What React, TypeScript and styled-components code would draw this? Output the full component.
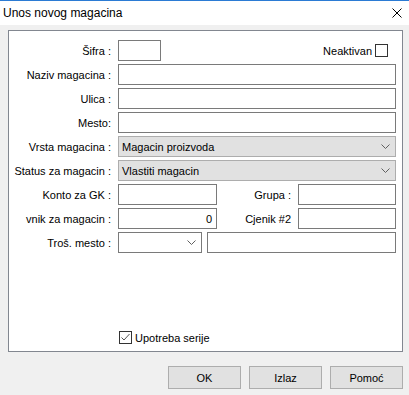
import React from 'react';
import styled, { createGlobalStyle } from 'styled-components';

const GlobalStyle = createGlobalStyle`
  html, body {
    margin: 0;
    padding: 0;
    background: #f0f0f0;
  }
  body {
    font-family: "Liberation Sans", Arial, sans-serif;
    font-size: 11px;
    color: #000;
  }
  * {
    box-sizing: border-box;
  }
`;

const Window = styled.div`
  width: 409px;
  height: 395px;
  display: flex;
  flex-direction: column;
  background: #f0f0f0;
`;

const TitleBar = styled.div`
  height: 25px;
  border-top: 1px solid #2b7bd4;
  background: #fff;
  display: flex;
  align-items: center;
  justify-content: space-between;
  padding: 0 7px 0 3px;
  font-size: 12px;
`;

const Content = styled.div`
  padding: 5px 6px 0 8px;
`;

const Panel = styled.div`
  height: 322px;
  border: 1px solid #828790;
  background: #fff;
  display: flex;
  flex-direction: column;
  padding: 9px 6px 7px 0;
`;

const Form = styled.div`
  display: grid;
  grid-template-columns: 102px 1fr;
  grid-auto-rows: 21px;
  column-gap: 7px;
  row-gap: 3px;
`;

const Label = styled.div`
  display: flex;
  align-items: center;
  justify-content: flex-end;
  white-space: nowrap;
`;

const Input = styled.div<{ $w?: number; $right?: boolean }>`
  height: 21px;
  width: ${p => (p.$w ? `${p.$w}px` : 'auto')};
  flex: ${p => (p.$w ? 'none' : '1')};
  border: 1px solid #7a7a7a;
  background: #fff;
  display: flex;
  align-items: center;
  justify-content: ${p => (p.$right ? 'flex-end' : 'flex-start')};
  padding: 0 4px 0 3px;
`;

const Select = styled.div<{ $w?: number; $flat?: boolean }>`
  height: 21px;
  width: ${p => (p.$w ? `${p.$w}px` : 'auto')};
  flex: ${p => (p.$w ? 'none' : '1')};
  border: 1px solid ${p => (p.$flat ? '#7a7a7a' : '#adadad')};
  background: ${p => (p.$flat ? '#fff' : '#e1e1e1')};
  display: flex;
  align-items: center;
  justify-content: space-between;
  padding: 0 5px 0 3px;
`;

const FieldRow = styled.div`
  display: flex;
  align-items: center;
  gap: 5px;
`;

const SplitRow = styled.div`
  display: grid;
  grid-template-columns: 99px 1fr 98px;
  column-gap: 7px;
`;

const CheckLabel = styled.label<{ $boxRight?: boolean }>`
  display: flex;
  align-items: center;
  gap: 3px;
  white-space: nowrap;
`;

const NeaktivanWrap = styled.div`
  margin-left: auto;
  margin-right: 8px;
`;

const Bottom = styled.div`
  margin-top: auto;
  padding-left: 110px;
`;

const Footer = styled.div`
  display: flex;
  justify-content: flex-end;
  gap: 8px;
  padding: 14px 6px 0 0;
`;

const Button = styled.button`
  width: 73px;
  height: 23px;
  border: 1px solid #adadad;
  background: #e1e1e1;
  font-family: "Liberation Sans", Arial, sans-serif;
  font-size: 11px;
  color: #000;
  padding: 0;
`;

const Chevron = () => (
  <svg width="9" height="5" viewBox="0 0 9 5">
    <polyline points="0.5,0.5 4.5,4.5 8.5,0.5" fill="none" stroke="#606060" strokeWidth="1" />
  </svg>
);

const Box = ({ checked }: { checked?: boolean }) => (
  <svg width="13" height="13" viewBox="0 0 13 13">
    <rect x="0.5" y="0.5" width="12" height="12" fill="#fff" stroke="#333" />
    {checked && <polyline points="2.5,6.5 5,9 10.5,3" fill="none" stroke="#555" strokeWidth="1" />}
  </svg>
);

const CloseIcon = () => (
  <svg width="10" height="10" viewBox="0 0 10 10">
    <line x1="0.5" y1="0.5" x2="9.5" y2="9.5" stroke="#000" strokeWidth="1" />
    <line x1="9.5" y1="0.5" x2="0.5" y2="9.5" stroke="#000" strokeWidth="1" />
  </svg>
);

export default function App() {
  return (
    <>
      <GlobalStyle />
      <Window>
        <TitleBar>
          <span>Unos novog magacina</span>
          <CloseIcon />
        </TitleBar>
        <Content>
          <Panel>
            <Form>
              <Label>Šifra :</Label>
              <FieldRow>
                <Input $w={43} />
                <NeaktivanWrap>
                  <CheckLabel>
                    Neaktivan <Box />
                  </CheckLabel>
                </NeaktivanWrap>
              </FieldRow>

              <Label>Naziv magacina :</Label>
              <Input />

              <Label>Ulica :</Label>
              <Input />

              <Label>Mesto:</Label>
              <Input />

              <Label>Vrsta magacina :</Label>
              <Select>
                <span>Magacin proizvoda</span>
                <Chevron />
              </Select>

              <Label>Status za magacin :</Label>
              <Select>
                <span>Vlastiti magacin</span>
                <Chevron />
              </Select>

              <Label>Konto za GK :</Label>
              <SplitRow>
                <Input />
                <Label>Grupa :</Label>
                <Input />
              </SplitRow>

              <Label>vnik za magacin :</Label>
              <SplitRow>
                <Input $right>0</Input>
                <Label>Cjenik #2</Label>
                <Input />
              </SplitRow>

              <Label>Troš. mesto :</Label>
              <FieldRow>
                <Select $w={84} $flat>
                  <span />
                  <Chevron />
                </Select>
                <Input />
              </FieldRow>
            </Form>
            <Bottom>
              <CheckLabel>
                <Box checked />
                Upotreba serije
              </CheckLabel>
            </Bottom>
          </Panel>
        </Content>
        <Footer>
          <Button>OK</Button>
          <Button>Izlaz</Button>
          <Button>Pomoć</Button>
        </Footer>
      </Window>
    </>
  );
}
